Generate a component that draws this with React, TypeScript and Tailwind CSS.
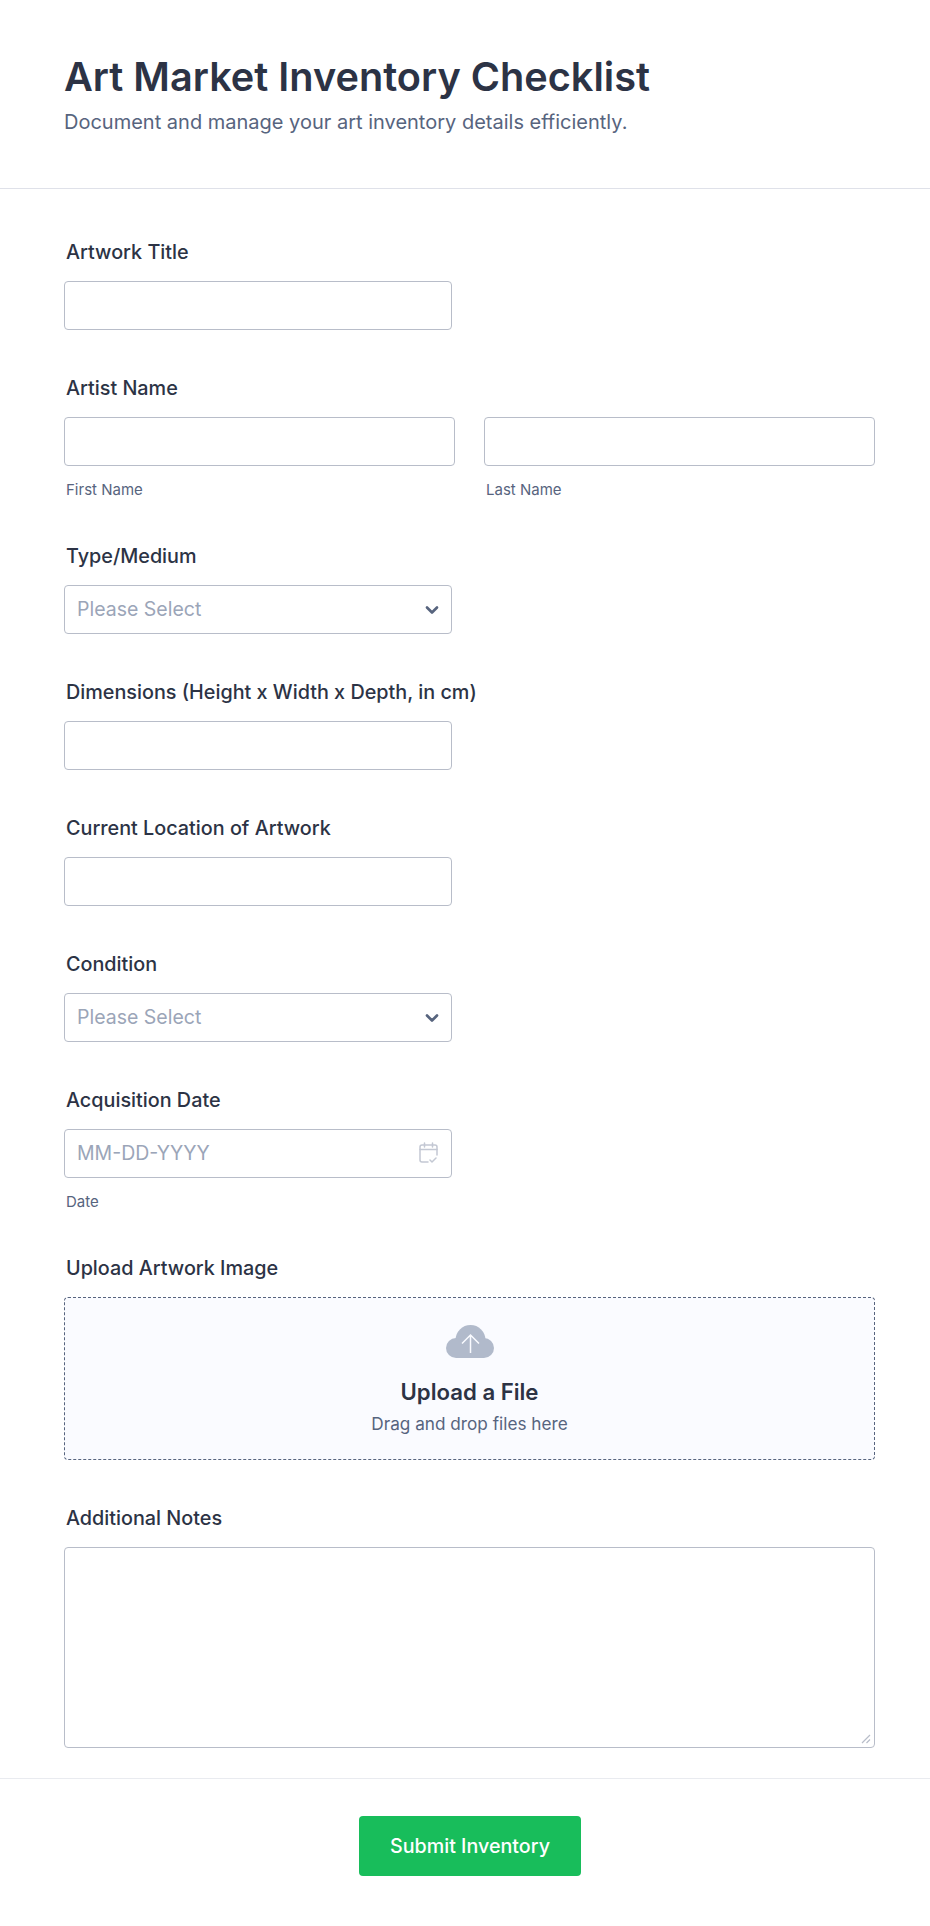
import { ChevronDown } from 'lucide-react'
import type { ReactNode } from 'react'

const FONT = "font-['Inter',sans-serif]"

function Label({ children }: { children: ReactNode }) {
  return <label className="block h-5 mb-5 ml-[2px] text-[19.8px] leading-[22px] font-medium text-[#2c3345]">{children}</label>
}

function Field({ label, children }: { label: string; children: ReactNode }) {
  return (
    <div className="mb-[47px]">
      <Label>{label}</Label>
      {children}
    </div>
  )
}

function TextBox({ className = 'w-[388px]' }: { className?: string }) {
  return <input className={`block h-[49px] rounded border border-[#b8bdc9] bg-white ${className}`} />
}

function SelectBox() {
  return (
    <div className="w-[388px] h-[49px] rounded border border-[#b8bdc9] bg-white flex items-center justify-between pl-[12px] pr-[9px]">
      <span className="text-[19.5px] text-[#9ba5b8]">Please Select</span>
      <ChevronDown size={20} strokeWidth={3.2} className="text-[#57647e]" />
    </div>
  )
}

function SubLabel({ children }: { children: ReactNode }) {
  return <p className="mt-4 ml-[2px] h-4 text-[15px] leading-4 text-[#57647e]">{children}</p>
}

export default function App() {
  return (
    <div className={`${FONT} w-[930px] h-[1926px] bg-white`}>
      {/* Header */}
      <header className="h-[189px] border-b border-[#dfe1e9] px-16 pt-[51px]">
        <h1 className="text-[39.7px] leading-[52px] font-semibold text-[#2c3345]">Art Market Inventory Checklist</h1>
        <p className="mt-[5px] text-[20px] leading-7 text-[#57647e]">Document and manage your art inventory details efficiently.</p>
      </header>

      {/* Fields */}
      <main className="pl-16 pr-[55px] pt-[52px]">
        <Field label="Artwork Title">
          <TextBox />
        </Field>

        <Field label="Artist Name">
          <div className="flex gap-[29px]">
            <div>
              <TextBox className="w-[391px]" />
              <SubLabel>First Name</SubLabel>
            </div>
            <div>
              <TextBox className="w-[391px]" />
              <SubLabel>Last Name</SubLabel>
            </div>
          </div>
        </Field>

        <Field label="Type/Medium">
          <SelectBox />
        </Field>

        <Field label="Dimensions (Height x Width x Depth, in cm)">
          <TextBox />
        </Field>

        <Field label="Current Location of Artwork">
          <TextBox />
        </Field>

        <Field label="Condition">
          <SelectBox />
        </Field>

        <Field label="Acquisition Date">
          <div className="relative w-[388px] h-[49px] rounded border border-[#b8bdc9] bg-white flex items-center pl-[12px]">
            <span className="text-[19.5px] text-[#9ba5b8]">MM-DD-YYYY</span>
            <svg className="absolute right-[13px] top-[12px]" width="19" height="21" viewBox="0 0 19 21" fill="none" stroke="#c3c8d3" strokeWidth="1.5" strokeLinecap="round" strokeLinejoin="round">
              <path d="M9 20H3a2 2 0 0 1-2-2V5a2 2 0 0 1 2-2h13a2 2 0 0 1 2 2v8" />
              <path d="M1 7.500h17M5.500 1v4M13.500 1v4" />
              <path d="M11 18l2 2 4-4" />
            </svg>
          </div>
          <SubLabel>Date</SubLabel>
        </Field>

        <Field label="Upload Artwork Image">
          <div className="h-[163px] rounded border border-dashed border-[#57647e] bg-[#fafbff] flex flex-col items-center pt-[27px]">
            <svg width="48" height="33" viewBox="0 0 48 33" fill="#b1bacb">
              <circle cx="24.500" cy="15" r="15" />
              <circle cx="10" cy="23" r="10" />
              <circle cx="38" cy="23" r="10" />
              <rect x="10" y="18" width="28" height="15" />
              <path d="M24.500 28V10.500M16 18.500l8.500-8.500 8.500 8.500" fill="none" stroke="#fafbff" strokeWidth="1.500" />
            </svg>
            <p className="mt-[20px] text-[22.2px] leading-7 font-semibold text-[#2c3345]">Upload a File</p>
            <p className="mt-[6px] text-[17.2px] leading-6 text-[#57647e]">Drag and drop files here</p>
          </div>
        </Field>

        <Label>Additional Notes</Label>
        <div className="relative">
          <textarea className="block w-full h-[201px] rounded border border-[#b8bdc9] bg-white resize-none" />
          <svg className="absolute right-[4px] bottom-[4px]" width="10" height="10" viewBox="0 0 10 10" fill="none" stroke="#b8bdc9" strokeWidth="1.200">
            <path d="M1 9L9 1M5.500 9L9 5.500" />
          </svg>
        </div>
      </main>

      {/* Footer */}
      <footer className="mt-[30px] border-t border-[#e9ebf0] flex justify-center pl-[10px] pt-[37px]">
        <button className="w-[222px] h-[60px] rounded bg-[#18bd5b] text-white text-[19.7px] font-medium pt-[1px]">Submit Inventory</button>
      </footer>
    </div>
  )
}
